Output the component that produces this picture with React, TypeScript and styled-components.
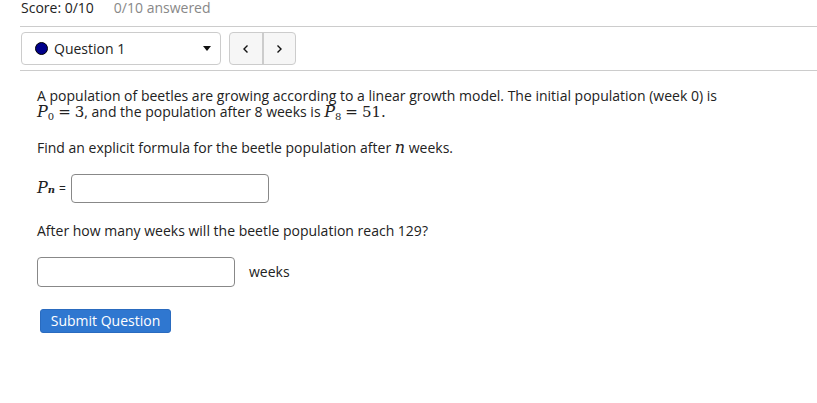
import React from "react";
import styled, { createGlobalStyle } from "styled-components";

const Global = createGlobalStyle`
  html, body { margin: 0; padding: 0; background: #fff; }
  body { font-family: "Open Sans", "Liberation Sans", sans-serif; color: #222; }
`;

const Page = styled.div`
  padding: 0 0 0 20px;
  width: 797px;
`;

const ScoreBar = styled.div`
  display: flex;
  gap: 20px;
  height: 26px;
  align-items: flex-start;
  font-size: 14px;
  line-height: 16px;
  border-bottom: 1px solid #ccc;
  padding-left: 1px;
`;

const Score = styled.span<{ $muted?: boolean }>`
  color: ${(p) => (p.$muted ? "#888" : "#222")};
`;

const NavBar = styled.div`
  display: flex;
  align-items: center;
  gap: 8px;
  height: 43px;
  border-bottom: 1px solid #ccc;
  padding-left: 1px;
`;

const Select = styled.div`
  box-sizing: border-box;
  width: 200px;
  height: 33px;
  border: 1px solid #ccc;
  border-radius: 4px;
  display: flex;
  align-items: center;
  padding: 0 9px 0 13px;
  font-size: 14px;
  gap: 6px;
`;

const Dot = styled.span`
  width: 13px;
  height: 13px;
  border-radius: 50%;
  background: #00008b;
  border: 1px solid #000;
  box-sizing: border-box;
`;

const SelectLabel = styled.span`
  flex: 1;
`;

const Caret = styled.span`
  width: 0;
  height: 0;
  border-left: 4px solid transparent;
  border-right: 4px solid transparent;
  border-top: 5px solid #111;
`;

const ButtonGroup = styled.div`
  display: flex;
  box-sizing: border-box;
  width: 67px;
  height: 33px;
  border: 1px solid #ccc;
  border-radius: 4px;
  background: #f6f6f6;
  overflow: hidden;
`;

const NavButton = styled.div<{ $divider?: boolean }>`
  flex: 1;
  display: flex;
  align-items: center;
  justify-content: center;
  border-left: ${(p) => (p.$divider ? "2px solid #ccc" : "none")};
`;

const Body = styled.div`
  padding: 17px 0 0 17px;
  font-size: 14px;
  line-height: 16px;
`;

const Para = styled.p<{ $mt?: number }>`
  margin: ${(p) => p.$mt ?? 0}px 0 0 0;
  height: auto;
`;

const Line = styled.span`
  display: block;
  height: 16px;
  white-space: nowrap;
`;

const M = styled.span`
  font-family: "DejaVu Serif", "Liberation Serif", serif;
  font-size: 15px;
  line-height: 0;
`;

const Eq = styled.span`
  font-family: "DejaVu Serif", "Liberation Serif", serif;
  font-size: 15px;
  line-height: 0;
  margin: 0 4px;
`;

const MI = styled.i`
  font-family: "DejaVu Serif", "Liberation Serif", serif;
  font-size: 16px;
  font-style: italic;
  line-height: 0;
`;

const Sub = styled.sub<{ $italic?: boolean }>`
  font-family: "DejaVu Serif", "Liberation Serif", serif;
  font-size: 10px;
  line-height: 0;
  vertical-align: -3px;
  font-style: ${(p) => (p.$italic ? "italic" : "normal")};
  font-weight: ${(p) => (p.$italic ? "bold" : "normal")};
`;

const Row = styled.div<{ $mt: number }>`
  display: flex;
  align-items: center;
  margin-top: ${(p) => p.$mt}px;
`;

const Input = styled.div<{ $w: number; $h: number }>`
  box-sizing: border-box;
  width: ${(p) => p.$w}px;
  height: ${(p) => p.$h}px;
  border: 1px solid #888;
  border-radius: 4px;
`;

const Label = styled.span`
  width: 34px;
  display: flex;
  align-items: baseline;
`;

const SmallEq = styled.span`
  font-size: 12px;
  margin-left: 4px;
`;

const Unit = styled.span`
  margin-left: 14px;
`;

const Submit = styled.button`
  display: block;
  margin: 22px 0 0 3px;
  width: 131px;
  height: 24px;
  border: 1px solid #2a6bbf;
  border-radius: 3px;
  background: #2f77d0;
  color: #fff;
  font-family: inherit;
  font-size: 14px;
  line-height: 16px;
  padding: 0;
`;

const Chevron = ({ dir }: { dir: "l" | "r" }) => (
  <svg width="8" height="10" viewBox="0 0 8 10">
    <path
      d={dir === "l" ? "M5.5 1.5 L2 5 L5.5 8.5" : "M2.5 1.5 L6 5 L2.5 8.5"}
      fill="none"
      stroke="#111"
      strokeWidth="1.4"
    />
  </svg>
);

export default function App() {
  return (
    <Page>
      <Global />
      <ScoreBar>
        <Score>Score: 0/10</Score>
        <Score $muted>0/10 answered</Score>
      </ScoreBar>
      <NavBar>
        <Select>
          <Dot />
          <SelectLabel>Question 1</SelectLabel>
          <Caret />
        </Select>
        <ButtonGroup>
          <NavButton>
            <Chevron dir="l" />
          </NavButton>
          <NavButton $divider>
            <Chevron dir="r" />
          </NavButton>
        </ButtonGroup>
      </NavBar>
      <Body>
        <Para>
          <Line>
            A population of beetles are growing according to a linear growth model. The initial population (week 0) is
          </Line>
          <Line>
            <MI>P</MI>
            <Sub>0</Sub>
            <Eq>=</Eq>
            <M>3</M>, and the population after 8 weeks is <MI>P</MI>
            <Sub>8</Sub>
            <Eq>=</Eq>
            <M>51.</M>
          </Line>
        </Para>
        <Para $mt={20}>
          <Line>
            Find an explicit formula for the beetle population after <MI>n</MI> weeks.
          </Line>
        </Para>
        <Row $mt={18}>
          <Label>
            <MI>P</MI>
            <Sub $italic>n</Sub>
            <SmallEq>=</SmallEq>
          </Label>
          <Input $w={198} $h={29} />
        </Row>
        <Para $mt={20}>
          <Line>After how many weeks will the beetle population reach 129?</Line>
        </Para>
        <Row $mt={18}>
          <Input $w={198} $h={30} />
          <Unit>weeks</Unit>
        </Row>
        <Submit>Submit Question</Submit>
      </Body>
    </Page>
  );
}
